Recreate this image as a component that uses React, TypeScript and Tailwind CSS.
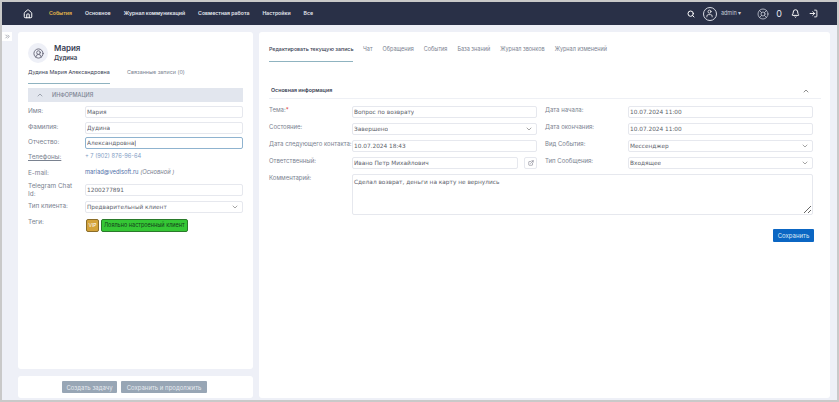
import { ChevronDown, ChevronUp, ChevronsRight, CircleUserRound, ExternalLink, Bell, LogIn, Search, User, Home, LifeBuoy } from "lucide-react";
import type { ReactNode } from "react";

const navItems = ["Основное", "Журнал коммуникаций", "Совместная работа", "Настройки", "Все"];
const tabs = ["Чат", "Обращения", "События", "База знаний", "Журнал звонков", "Журнал изменений"];

const inputFont = "font-['DejaVu_Sans',sans-serif]";

function Field({ value, focused, select }: { value: string; focused?: boolean; select?: boolean }) {
  return (
    <div
      className={`flex h-[12px] min-w-0 flex-1 items-center justify-between rounded-[2px] border bg-white pl-[1px] pr-[3px] text-[5.8px] text-[#5c626b] ${inputFont} ${
        focused ? "border-[#8fb3cf]" : "border-[#e6e8ee]"
      }`}
    >
      <span className="truncate">
        {value}
        {focused && <span className="text-[#222]">|</span>}
      </span>
      {select && <ChevronDown size={8} strokeWidth={1.6} className="shrink-0 text-[#555]" />}
    </div>
  );
}

function LeftRow({ label, children, className = "", labelClass = "" }: { label: ReactNode; children: ReactNode; className?: string; labelClass?: string }) {
  return (
    <div className={`flex items-start ${className}`}>
      <div className="w-[57px] shrink-0 pt-[1px] pr-[6px] text-[6.4px] leading-[8px] text-[#7a8290]">
        <div className={labelClass}>{label}</div>
      </div>
      <div className="flex min-w-0 flex-1">{children}</div>
    </div>
  );
}

function RightRow({ label, children }: { label: ReactNode; children: ReactNode }) {
  return (
    <div className="flex items-start">
      <div className="w-[83px] shrink-0 whitespace-nowrap text-[6px] leading-[8px] text-[#7a8290]">{label}</div>
      <div className="flex min-w-0 flex-1 items-center gap-[6px]">{children}</div>
    </div>
  );
}

export default function App() {
  return (
    <div className="flex h-[402px] w-[839px] flex-col overflow-hidden border-2 border-[#c9c9c9] bg-[#eef0f7] font-['Inter',sans-serif]">
      <header className="flex h-[23px] shrink-0 items-center bg-[#293047] pl-[21px] pr-[19px] text-white">
        <Home size={10} strokeWidth={2.4} />
        <nav className="ml-[16px] flex items-center gap-[13px] text-[5.2px] font-semibold">
          <span className="text-[#e8b84a]">События</span>
          {navItems.map((n) => (
            <span key={n} className="text-[#e6e8ef]">
              {n}
            </span>
          ))}
        </nav>
        <div className="ml-auto flex items-center">
          <Search size={8} strokeWidth={3} />
          <div className="ml-[8px] flex h-[14px] w-[14px] items-center justify-center rounded-full border border-[#d8dbe4]">
            <User size={9} strokeWidth={2} />
          </div>
          <span className="ml-[4px] text-[5.5px] text-[#c5c9d6]">admin ▾</span>
          <LifeBuoy size={12} strokeWidth={1.6} className="ml-[16px] text-[#c5c9d6]" />
          <span className="ml-[7px] text-[9px] leading-none text-[#e6e8ef]">0</span>
          <Bell size={9} strokeWidth={2.6} className="ml-[9px]" />
          <LogIn size={9} strokeWidth={2.4} className="ml-[9px]" />
        </div>
      </header>

      <div className="flex min-h-0 flex-1 pt-[7px] pr-[7px] pb-[2px]">
        <div className="w-[16px] shrink-0">
          <div className="flex h-[9px] w-[10px] items-center justify-center bg-white text-[#6b7280]">
            <ChevronsRight size={7} />
          </div>
        </div>

        <div className="flex w-[235px] shrink-0 flex-col gap-[7px]">
          <section className="flex-1 rounded-[3px] bg-white px-[10px] pt-[11px]">
            <div className="flex items-center gap-[6px]">
              <div className="flex h-[20px] w-[20px] items-center justify-center rounded-full bg-[#eef0f7] text-[#667]">
                <CircleUserRound size={11} />
              </div>
              <div>
                <div className="text-[8px] leading-[10px] font-semibold text-[#3a4254]">Мария</div>
                <div className="text-[6px] leading-[10px] font-semibold text-[#3a4254]">Дудина</div>
              </div>
            </div>
            <div className="mt-[6px] flex items-start text-[5.4px] leading-[7px]">
              <div className="w-[82px] border-b border-[#8fb3c0] pb-[7px] whitespace-nowrap text-[#3a4254]">Дудина Мария Александровна</div>
              <div className="ml-[17px] whitespace-nowrap text-[#7a8290]">Связанные записи (0)</div>
            </div>
            <div className="mt-[4px] flex h-[14px] items-center bg-[#e2e6ee] pl-[8px] text-[5.5px] font-medium text-[#7a8290]">
              <ChevronUp size={8} strokeWidth={2} />
              <span className="ml-[8px]">ИНФОРМАЦИЯ</span>
            </div>
            <div className="mt-[4px] flex flex-col">
              <LeftRow label="Имя:"><Field value="Мария" /></LeftRow>
              <LeftRow label="Фамилия:" className="mt-[4px]"><Field value="Дудина" /></LeftRow>
              <LeftRow label="Отчество:" className="mt-[3px]"><Field value="Александровна" focused /></LeftRow>
              <LeftRow label={<span className="underline">Телефоны:</span>} className="mt-[3px]">
                <span className="text-[5.7px] leading-[8px] text-[#7f9cc4]">+ 7 (902) 876-96-64</span>
              </LeftRow>
              <LeftRow label="E-mail:" className="mt-[7px]">
                <span className="text-[5.8px] leading-[8px] text-[#4f6fa8]">
                  mariad@vedisoft.ru <i className="text-[#7a8290]">(Основной )</i>
                </span>
              </LeftRow>
              <LeftRow label="Telegram Chat Id:" labelClass="-mt-[3px]" className="mt-[7px]"><Field value="1200277891" /></LeftRow>
              <LeftRow label="Тип клиента:" className="mt-[3px]"><Field value="Предварительный клиент" select /></LeftRow>
              <LeftRow label="Теги:" labelClass="-mt-[2px]" className="mt-[6px]">
                <div className="flex items-center gap-[2px] pl-[1px] text-[5.5px]">
                  <span className="flex h-[13px] w-[13px] items-center justify-center rounded-[2px] border border-[#8a6d2a] bg-[#d4a33a] text-[5px] text-white">VIP</span>
                  <span className="flex h-[13px] items-center rounded-[2px] border border-[#2a7a2a] bg-[#35c735] px-[2px] text-[#14401a]">Лояльно настроенный клиент</span>
                </div>
              </LeftRow>
            </div>
          </section>
          <section className="flex h-[22px] shrink-0 items-center justify-center gap-[4px] rounded-[3px] bg-white pr-[2px]">
            <button className="h-[12px] w-[55px] rounded-[1px] bg-[#98a6b5] text-[6px] text-[#e6eaf0]">Создать задачу</button>
            <button className="h-[12px] w-[86px] rounded-[1px] bg-[#98a6b5] text-[6px] text-[#e6eaf0]">Сохранить и продолжить</button>
          </section>
        </div>

        <main className="ml-[6px] flex-1 rounded-[3px] bg-white pr-[9px] pl-[10px] pt-[14px]">
          <div className="flex items-start gap-[10px] text-[5.5px] leading-[7px] text-[#7a8290]">
            <div className="w-[84px] border-b border-[#8fb3c0] pb-[8px] text-[5.3px] font-medium whitespace-nowrap text-[#3a4254]">Редактировать текущую запись</div>
            {tabs.map((t) => (
              <span key={t}>{t}</span>
            ))}
          </div>
          <div className="mt-[25px] flex h-[12px] items-center justify-between border-b border-[#eef0f5] pb-[3px] pl-[2px] text-[5.3px] font-semibold text-[#3a4254]">
            <span>Основная информация</span>
            <ChevronUp size={8} strokeWidth={2} className="mr-[11px] text-[#555]" />
          </div>
          <div className="mt-[7px] mr-[8px] grid grid-cols-[268px_1fr] gap-x-[8px] gap-y-[5px]">
            <RightRow label={<>Тема:<span className="text-[#d33]">*</span></>}><Field value="Вопрос по возврату" /></RightRow>
            <RightRow label="Дата начала:"><Field value="10.07.2024 11:00" /></RightRow>
            <RightRow label="Состояние:"><Field value="Завершено" select /></RightRow>
            <RightRow label="Дата окончания:"><Field value="10.07.2024 11:00" /></RightRow>
            <RightRow label="Дата следующего контакта:"><Field value="10.07.2024 18:43" /></RightRow>
            <RightRow label="Вид События:"><Field value="Мессенджер" select /></RightRow>
            <RightRow label="Ответственный:">
              <Field value="Ивано Петр Михайлович" />
              <div className="flex h-[12px] w-[13px] shrink-0 items-center justify-center rounded-[2px] border border-[#e6e8ee] text-[#667]">
                <ExternalLink size={6} />
              </div>
            </RightRow>
            <RightRow label="Тип Сообщения:"><Field value="Входящее" select /></RightRow>
            <div className="col-span-2 flex items-start">
              <div className="w-[83px] shrink-0 text-[6px] leading-[8px] text-[#7a8290]">Комментарий:</div>
              <textarea
                readOnly
                value="Сделал возврат, деньги на карту не вернулись"
                className={`h-[41px] flex-1 rounded-[2px] border border-[#e6e8ee] px-[1px] py-[3px] text-[5.8px] text-[#5c626b] outline-none ${inputFont}`}
              />
            </div>
          </div>
          <div className="mt-[14px] mr-[7px] flex justify-end">
            <button className="h-[13px] w-[41px] rounded-[1px] bg-[#0b66c3] text-[6px] text-[#dfeaf6]">Сохранить</button>
          </div>
        </main>
      </div>
    </div>
  );
}
